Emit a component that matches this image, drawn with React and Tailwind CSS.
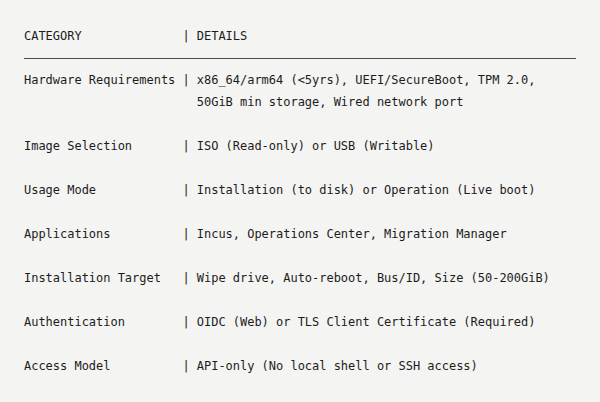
const ROWS = [
  ['Hardware Requirements', 'x86_64/arm64 (<5yrs), UEFI/SecureBoot, TPM 2.0, 50GiB min storage, Wired network port'],
  ['Image Selection', 'ISO (Read-only) or USB (Writable)'],
  ['Usage Mode', 'Installation (to disk) or Operation (Live boot)'],
  ['Applications', 'Incus, Operations Center, Migration Manager'],
  ['Installation Target', 'Wipe drive, Auto-reboot, Bus/ID, Size (50-200GiB)'],
  ['Authentication', 'OIDC (Web) or TLS Client Certificate (Required)'],
  ['Access Model', 'API-only (No local shell or SSH access)'],
]

function Row({ left, right }) {
  return (
    <div className="flex">
      <span className="w-[158.4px] shrink-0 whitespace-pre">{left}</span>
      <span className="w-[14.4px] shrink-0 whitespace-pre">| </span>
      <span className="flex-1 min-w-0">{right}</span>
    </div>
  )
}

export default function App() {
  return (
    <div className="w-[600px] h-[402px] bg-[#f4f4f3] text-[#1c1c1c] px-6 pt-[25px] font-['DejaVu_Sans_Mono',monospace] text-[12px] tracking-[-0.02px] leading-[22px] overflow-hidden">
      <Row left="CATEGORY" right="DETAILS" />
      {/* divider */}
      <div className="h-[22px] flex items-center">
        <div className="w-full h-px bg-[#4a4a4a]" />
      </div>
      <div className="flex flex-col gap-[22px]">
        {ROWS.map(([l, r]) => (
          <Row key={l} left={l} right={r} />
        ))}
      </div>
    </div>
  )
}
